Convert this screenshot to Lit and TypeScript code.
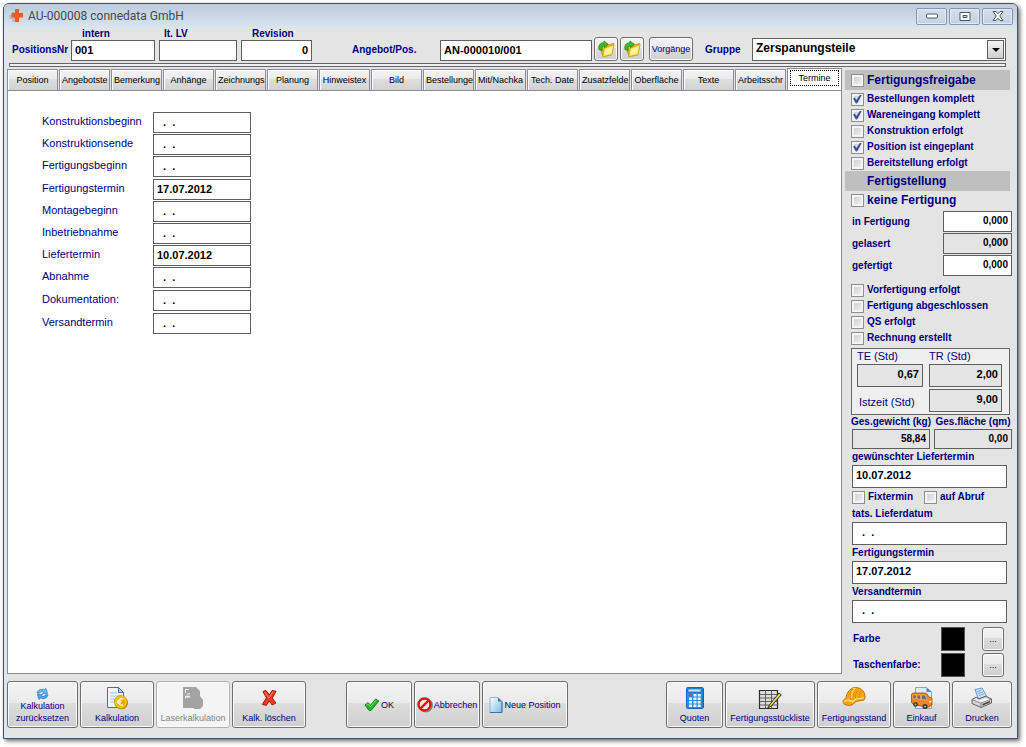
import { LitElement, html, css, svg, nothing } from "lit";
import { customElement, property, state } from "lit/decorators.js";
import { classMap } from "lit/directives/class-map.js";

const EMPTY_DATE = "  .  .";

const icons: Record<string, unknown> = {
  folder: svg`<svg width="18" height="18" viewBox="0 0 18 18">
    <path d="M5 5.5 7 3.5l3.500.2L11.500 5l5-1.600.5.6-2.500 11L6 16.500 3.500 9z" fill="#e3b91c" stroke="#a8860c" stroke-width=".7"/>
    <path d="M7 8.500 17 4.500l-2.200 10.300L5.800 16.500z" fill="#fde968" stroke="#c9a21a" stroke-width=".7"/>
    <path d="M8.500 10 15 7.300l-1.200 5.800-6 1.300z" fill="#fff6a8"/>
    <path d="M2 9.500C1 6 3 2.500 7 2.800L7 1l4.200 3.400L7.500 7.500V5.800C5 5.500 4.500 7.500 5.300 10.500z" fill="#3fbf2c" stroke="#157a12" stroke-width=".7"/></svg>`,
  refresh: svg`<svg width="13" height="12" viewBox="0 0 13 12">
    <path d="M1 5.200C1.500 1.800 5.500.4 8.500 1.900L10 .5l1.500 5H6.300l1.500-1.600C6 3 4.200 3.600 3.600 5.200z" fill="#6fc0fa" stroke="#1765b5" stroke-width=".6"/>
    <path d="M12 6.800c-.5 3.400-4.500 4.800-7.500 3.300L3 11.500l-1.500-5h5.200L5.200 8.100C7 9 8.800 8.400 9.400 6.800z" fill="#4ea6f0" stroke="#1765b5" stroke-width=".6"/></svg>`,
  calc: svg`<svg width="24" height="24" viewBox="0 0 24 24">
    <path d="M2.500 1.500h11l5 5v15h-16z" fill="#eef5fd" stroke="#4a6ea5"/>
    <path d="M13.500 1.500v5h5z" fill="#b9d2ee" stroke="#4a6ea5"/>
    <path d="M5 7h7M5 10h10M5 13h6M5 16h4" stroke="#a9c4e4"/>
    <ellipse cx="16.500" cy="17" rx="6.500" ry="6.300" fill="#c98c07"/>
    <circle cx="15.800" cy="16" r="6.400" fill="#fbc918" stroke="#c48a06" stroke-width=".8"/>
    <circle cx="15.800" cy="16" r="4.600" fill="#e9a90c"/>
    <path d="M18.300 13.600a3.100 3.100 0 1 0 0 4.800M11.800 15.200h4.700M11.800 16.900h4.200" stroke="#fff8d0" stroke-width="1.300" fill="none"/></svg>`,
  laser: svg`<svg width="24" height="24" viewBox="0 0 24 24">
    <path d="M2 1h13l4 4v5l3 4v6l-3 3h-6v-1H2z" fill="#a3a3a3"/>
    <path d="M4 3h4v1H5v3H4zM6 8l3-1v1l-3 1zM4 10l4-.5 2 2H5v1H4z" fill="#f5f5f5"/></svg>`,
  cross: svg`<svg width="24" height="24" viewBox="0 0 24 24">
    <path d="M6 5.500 9 4.500l3.300 4.500 2.700-4.500 4 .8-3.700 6.700 3.500 5-3.500 2-3.200-4-2.700 4.300-4-.8 4-6.700z" fill="#f2391f" stroke="#9e1408" stroke-width="1"/>
    <path d="M7.500 6 12 12l4-6.500" stroke="#ff8a70" stroke-width="1" fill="none"/></svg>`,
  ok: svg`<svg width="16" height="14" viewBox="0 0 16 14">
    <path d="M1 7 4 4.500l2.500 2.700L11.500 1l3.500 2L7 12.500H5z" fill="#25b52a" stroke="#0c7513" stroke-width=".8"/>
    <path d="M2.500 7 4 5.800l2.500 2.900L11.800 2.400" stroke="#7de873" fill="none" stroke-width=".9"/></svg>`,
  cancel: svg`<svg width="16" height="16" viewBox="0 0 16 16">
    <path d="M8.800 2.200a6 6 0 1 1 0 12.400a6 6 0 1 1 0-12.400M4.800 13 13.200 4.600" stroke="#8b8b8b" stroke-width="2" fill="none"/>
    <circle cx="7.500" cy="7.500" r="6" fill="#f3e9e9" stroke="#fb0007" stroke-width="2.400"/>
    <path d="M3.500 11.500l8-8" stroke="#fb0007" stroke-width="2.400"/></svg>`,
  page: svg`<svg width="14" height="16" viewBox="0 0 14 16">
    <defs><linearGradient id="pg" x2="1" y2="1"><stop offset="0" stop-color="#fff"/><stop offset="1" stop-color="#79bbe6"/></linearGradient></defs>
    <path d="M1 .5h8l4 4v11H1z" fill="url(#pg)" stroke="#7ba6cd" stroke-width=".8"/>
    <path d="M1 15.500h12v-11" fill="none" stroke="#33739f"/><path d="M9 .5v4h4z" fill="#2f7fbd"/></svg>`,
  quoten: svg`<svg width="24" height="24" viewBox="0 0 24 24">
    <path d="M20 1.500 21 3v18l-1 1.500z" fill="#1c5fa8"/>
    <rect x="3.500" y="1.500" width="16.500" height="21" rx="1" fill="#2b8de4" stroke="#1766b6"/>
    <path d="M5 3h13v3H5z" fill="#bfe7f5" stroke="#0f4f93" stroke-width=".6"/>
    <g fill="#e8f5fe"><path d="M10.500 8h3v2.500h-3zM14.700 8h3v2.500h-3zM6 11.500h3V14H6zM10.500 11.500h3V14h-3zM14.700 11.500h3V14h-3zM6 15h3v2.500H6zM10.500 15h3v2.500h-3zM14.700 15h3v2.500h-3zM6 18.500h3V21H6zM10.500 18.500h3V21h-3zM14.700 18.500h3V21h-3z"/></g>
    <path d="M6 8h3v2.500H6z" fill="#e0483c"/></svg>`,
  list: svg`<svg width="26" height="24" viewBox="0 0 26 24">
    <path d="M2.500 4.500h18v18h-18z" fill="#dcdcdc" stroke="#2c2c2c" stroke-width="1.200"/>
    <path d="M2.500 8.500h18M2.500 12h18M2.500 15.500h18M2.500 19h18M8.500 4.500v18M14.500 4.500v18" stroke="#555" stroke-width=".9"/>
    <path d="M12 19.500 22 7l2.300 1.800L14 20.500l-3.200 1z" fill="#d8c21c" stroke="#222" stroke-width=".9"/>
    <path d="M14 18.500 22.500 8.500" stroke="#fff59a" stroke-width=".8"/></svg>`,
  helmet: svg`<svg width="26" height="24" viewBox="0 0 26 24">
    <path d="M2 15.500c0-2 2-2.500 3-3C5.200 6.500 9 2.500 14.500 1.500 20.500 1.500 24.500 6 24 12l-1 2-8 1.500-4 3.500c-4 1-9 0-9-3.500z" fill="#fda60f" stroke="#ba6500" stroke-width=".9"/>
    <path d="M3 15.500c2-2 6-2 8.500.3L15 13l8-1" stroke="#ffe48a" stroke-width="1.200" fill="none"/>
    <path d="M9.500 3.500 12 1.500l4.500.3c-3 2-4.500 5.500-4.500 10l-2.500 1.500C9 9 9.500 6 12 3z" fill="#ffd155" stroke="#c87400" stroke-width=".6"/>
    <path d="M17 4.500c-2 2-2.800 4.500-2.700 7.500M20.500 5c-1.800 2-2.300 4-2.200 6.500" stroke="#e08300" fill="none"/></svg>`,
  van: svg`<svg width="24" height="24" viewBox="0 0 24 24">
    <path d="M5.500 1.500h11l5 4.500v16.500h-16z" fill="#dcebfa" stroke="#7fa5d1"/><path d="M16.500 1.500V6h5z" fill="#4d8acb"/>
    <path d="M1.500 9c0-1.500 1-2 2-2h11c2 0 3 1 4 3.500l3.500 2v6.500l-4 2.200-14-2.500-2.500-2z" fill="#f68319" stroke="#a94a00" stroke-width=".8"/>
    <path d="M2.800 9h3.400v4l-3.400-.5zM7 9h3.500v4.500L7 13zM11.500 9h3.300l2.500 5-5.800-.5z" fill="#5f6f85" stroke="#ffd09c" stroke-width=".5"/>
    <circle cx="5.500" cy="18.500" r="2.300" fill="#333"/><circle cx="5.500" cy="18.500" r=".9" fill="#bbb"/>
    <circle cx="15" cy="20.500" r="2.500" fill="#333"/><circle cx="15" cy="20.500" r="1" fill="#bbb"/>
    <path d="M19 15l2.500-.6v1.600l-2.500.7z" fill="#fff2b0"/></svg>`,
  print: svg`<svg width="24" height="24" viewBox="0 0 24 24">
    <path d="M5 3.500 12 2l4.500 8-8 3z" fill="#cfe4fb" stroke="#5b8fd0" stroke-width=".9"/>
    <path d="M7 5.500l4.500-1M8 7.500l5-1.200M9 9.500l5-1.500" stroke="#6ea3e0" stroke-width=".9"/>
    <path d="M2 13.500 6.500 11l1.800 2 7.500-2.700L21.500 13v4L11 21.500 2 17.500z" fill="#d4d4d4" stroke="#555" stroke-width=".9"/>
    <path d="M2 13.500 11 17.200 21.500 13M11 17.200v4" stroke="#777" stroke-width=".8" fill="none"/>
    <path d="M12.500 18l7.500-3v1.500l-7.500 3z" fill="#333"/><path d="M4 13.400l7 2.800 8-3-3-1.300-7.500 2.700-2-2z" fill="#f6f6f6"/></svg>`,
};

@customElement("tool-button")
export class ToolButton extends LitElement {
  @property() icon = "";
  @property() label = "";
  @property() hint = "";
  @property({ type: Boolean }) inline = false;
  @property({ type: Boolean }) disabled = false;
  @property({ type: Boolean }) compact = false;

  static styles = css`
    :host { display: flex; }
    .btn {
      flex: 1; min-width: 0; box-sizing: border-box; display: flex; flex-direction: column;
      align-items: center; justify-content: flex-end; gap: 2px; margin: 0; padding: 0 0 3px;
      border: 1px solid #6f6f6f; border-radius: 3px; color: #000080;
      background: linear-gradient(#f3f3f3, #ebebeb 46%, #dddddd 47%, #cfcfcf);
      box-shadow: inset 0 0 0 1px #fafafa;
      font: 9px/12px "Liberation Sans", Arial, sans-serif;
    }
    .inline { flex-direction: row; justify-content: center; gap: 1px; padding: 0; }
    .compact { gap: 0; }
    .btn:disabled { background: #f4f4f4; border-color: #adb2b5; color: #838383; }
    .text { white-space: pre; }
    svg { display: block; flex: none; }
  `;

  render() {
    return html`<button
      class=${classMap({ btn: true, inline: this.inline, compact: this.compact })}
      aria-label=${this.hint || nothing}
      ?disabled=${this.disabled}
    >${this.icon ? icons[this.icon] : nothing}${this.label ? html`<span class="text">${this.label}</span>` : nothing}</button>`;
  }
}

@customElement("app-root")
export class AppRoot extends LitElement {
  @state() private activeTab = "Termine";

  private tabs = ["Position", "Angebotste", "Bemerkung", "Anhänge", "Zeichnungs", "Planung", "Hinweistex", "Bild",
    "Bestellunge", "Mit/Nachka", "Tech. Date", "Zusatzfelde", "Oberfläche", "Texte", "Arbeitsschr", "Termine"];

  private dateGroups = [
    [["Konstruktionsbeginn", ""], ["Konstruktionsende", ""], ["Fertigungsbeginn", ""]],
    [["Fertigungstermin", "17.07.2012"], ["Montagebeginn", ""], ["Inbetriebnahme", ""], ["Liefertermin", "10.07.2012"], ["Abnahme", ""]],
    [["Dokumentation:", ""]],
    [["Versandtermin", ""]],
  ];

  static styles = css`
    :host {
      display: block; box-sizing: border-box; height: 100vh; min-height: 747px; padding: 3px 8px 8px 3px;
      background: #fff; color: #000080; font: bold 10px/12px "Liberation Sans", Arial, sans-serif;
    }
    * { box-sizing: border-box; }
    .window {
      height: 100%; display: flex; flex-direction: column; overflow: hidden;
      border: 1px solid #4b4f55; border-radius: 6px 6px 0 0; background: #e4e4e4;
      box-shadow: 2px 2px 4px #0009, inset 0 0 0 2px #dbe7f3;
    }
    .titlebar {
      flex: none; height: 24px; display: flex; align-items: center; gap: 4px; padding: 0 4px 0 5px;
      background: linear-gradient(#bccbdb, #d8e5f2); color: #45484d;
      font: 12px/16px Roboto, "Noto Sans", sans-serif;
    }
    .title { flex: 1; }
    .caption { display: flex; gap: 2px; }
    .cap {
      width: 31px; height: 17px; padding: 0; display: grid; place-items: center;
      border: 1px solid #8496ab; border-radius: 2px; background: linear-gradient(#d4e0ed, #c2d1e2);
      box-shadow: inset 0 0 0 1px #e2ebf4;
    }
    svg { display: block; flex: none; }

    input, select { font: bold 11px/13px "Liberation Sans", Arial, sans-serif; color: #000; border-radius: 0; margin: 0; }
    .box { width: 100%; min-width: 0; height: 21px; padding: 0 3px 1px; border: 1px solid #5f5f5f; background: #fff; outline: none; }
    .right { text-align: right; }
    .small { font-size: 10px; }
    .gray { background: #e4e4e4; }
    .tall { height: 23px; }

    .head { flex: none; display: flex; align-items: flex-end; height: 33px; padding: 0 11px 0 8px; }
    .cap-label { display: flex; align-items: center; height: 23px; white-space: nowrap; }
    .pos { width: 59px; }
    .field { display: flex; flex-direction: column; margin-right: 4px; }
    .field label { padding-left: 11px; }
    .field .near { padding-left: 5px; }
    .w-intern { width: 84px; }
    .w-lv { width: 78px; }
    .w-rev { width: 71px; }
    .offer { width: 88px; margin-left: 36px; }
    .w-offer { width: 152px; }
    .icon-btn { width: 24px; height: 24px; margin-left: 2px; }
    .history { width: 44px; height: 24px; margin: 0 12px 0 5px; }
    .group { width: 47px; }
    .combo { flex: 1; display: grid; height: 23px; }
    .combo > * { grid-area: 1 / 1; }
    .combo select { appearance: none; width: 100%; height: 23px; padding: 0 3px 3px; font-size: 12px; border: 1px solid #5f5f5f; background: #fff; }
    .arrow {
      justify-self: end; align-self: center; width: 17px; height: 19px; margin-right: 2px; display: grid; place-items: center;
      border: 1px solid #5f5f5f; background: linear-gradient(#f2f2f2, #d0d0d0); pointer-events: none;
    }
    .rule { flex: none; height: 4px; margin: 2px 11px 0 5px; border: 1px solid #666; background: #f0f0f0; }

    .work { flex: 1; display: flex; gap: 3px; padding: 0 5px 0 3px; }
    .main { flex: 1; min-width: 0; display: flex; flex-direction: column; padding-bottom: 5px; }
    .tabs { flex: none; display: flex; align-items: flex-end; gap: 1px; height: 23px; }
    .tab {
      flex: 1 1 0; min-width: 0; height: 21px; padding: 0 2px; overflow: hidden; display: flex;
      border: 1px solid #8b8c95; border-bottom: 0; box-shadow: inset 1px 1px 0 #fff;
      background: linear-gradient(#f3f3f3, #ebebeb 46%, #dedede 47%, #d2d2d2); color: #000;
      font: 9px/20px "Liberation Sans", Arial, sans-serif;
    }
    .tab span { margin: 0 auto; white-space: nowrap; }
    .tab.active { flex: 0 0 55px; height: 22px; padding: 1px 2px 4px; background: #fff; box-shadow: none; }
    .tab.active span { flex: 1; border: 1px dotted #000; line-height: 14px; }
    .panel { flex: 1; border: 1px solid #8b8c95; background: #fff; padding: 21px 34px; display: flex; flex-direction: column; gap: 2px; }
    .dates { display: flex; flex-direction: column; gap: 1px; }
    .date { display: grid; grid-template-columns: 111px 98px; font-weight: normal; font-size: 11px; }
    .date label { padding-top: 3px; }

    .side { flex: none; width: 167px; padding-top: 3px; display: flex; flex-direction: column; }
    .band { flex: none; height: 20px; margin-right: 2px; padding-left: 6px; display: flex; align-items: center; background: #bfbfbf; font-size: 12px; }
    .heading { padding-left: 22px; }
    .check { display: flex; align-items: center; gap: 3px; height: 16px; white-space: nowrap; }
    .checks { padding: 1px 0 0 6px; }
    .lower { padding: 6px 0 2px 6px; }
    .none { height: 18px; padding-left: 6px; font-size: 12px; }
    .tick { appearance: none; flex: none; width: 13px; height: 13px; display: grid; place-items: center; border: 1px solid #8e8f8f; background: linear-gradient(135deg, #c5c9ce, #f6f6f6); box-shadow: inset 0 0 0 2px #f4f4f4; }
    .tick:checked::before { content: ""; width: 9px; height: 9px; background: #3a539b; clip-path: polygon(0 45%, 20% 35%, 38% 62%, 80% 0, 100% 0, 45% 100%, 32% 100%); }
    .amounts { display: grid; grid-template-columns: 1fr 69px; row-gap: 1px; padding: 2px 0 0 7px; align-items: center; }
    .amounts input { padding-bottom: 3px; }
    .hours { display: grid; grid-template-columns: 66px 73px; column-gap: 6px; height: 67px; margin: 0 2px 0 6px; padding: 1px 5px 0; border: 1px solid #666; background: #efefef; font-weight: normal; font-size: 11px; }
    .hours input { padding-bottom: 3px; }
    .hours .wide { align-self: center; padding-left: 2px; }
    .weights { display: grid; grid-template-columns: 78px 78px; column-gap: 4px; margin: 0 0 0 7px; white-space: nowrap; }
    .weights label { height: 14px; padding-top: 1px; justify-self: center; }
    .weights input { height: 20px; padding-bottom: 2px; }
    .stack { margin: 0 5px 0 7px; display: flex; flex-direction: column; }
    .stack > label { line-height: 16px; }
    .stack > input { height: 23px; padding-bottom: 3px; }
    .pair { display: flex; gap: 11px; height: 18px; align-items: center; }
    .colors { display: grid; grid-template-columns: 1fr 24px 22px; column-gap: 17px; row-gap: 2px; align-items: center; margin: 4px 8px 0 8px; }
    .swatch { height: 24px; border: 1px solid #555; background: #000; }
    .more { height: 24px; }

    .foot { flex: none; display: flex; justify-content: space-between; gap: 8px; margin: 2px 5px 10px 3px; height: 47px; }
    .foot .set { display: flex; gap: 2px; }
    .foot .center { margin-right: 58px; }
    .w1 { width: 60px; } .w2 { width: 66px; } .w3 { width: 74px; } .w4 { width: 86px; } .w5 { width: 90px; }
    .w57 { width: 57px; }
    .w71 { width: 71px; }
  `;

  private check(id: string, label: string, checked = false, cls = "") {
    return html`<div class="check ${cls}"><input class="tick" type="checkbox" id=${id} ?checked=${checked}><label for=${id}>${label}</label></div>`;
  }

  render() {
    return html`<div class="window">
      <div class="titlebar">
        <svg width="15" height="15" viewBox="0 0 15 15">
          <path d="M3 3h4v3H9v4H7v3H3v-3H0V6h3z" fill="#bdbdbd"/>
          <path d="M6 0h4v4h4v4.500h-4V13H6V8.500H2.500V4H6z" fill="#ee5a24"/></svg>
        <span class="title">AU-000008 connedata GmbH</span>
        <div class="caption">
          <button class="cap" aria-label="Minimieren"><svg width="12" height="6"><rect x=".5" y="1" width="11" height="4" rx="1" fill="#fff" stroke="#51565e"/></svg></button>
          <button class="cap" aria-label="Maximieren"><svg width="12" height="9"><path d="M1 .5h10v8H1z" fill="#fff" stroke="#51565e"/><path d="M4 3.500h4v2H4z" fill="#c9d7e6" stroke="#51565e"/></svg></button>
          <button class="cap" aria-label="Schließen"><svg width="12" height="10" viewBox="0 0 12 10"><path d="M1 .5h3l2 2.300L8 .5h3L7.700 5 11 9.500H8L6 7.200 4 9.500H1L4.300 5z" fill="#fff" stroke="#51565e"/></svg></button>
        </div>
      </div>
      <div class="head">
        <label class="cap-label pos" for="intern">PositionsNr</label>
        <div class="field w-intern"><label for="intern">intern</label><input class="box" id="intern" value="001"></div>
        <div class="field w-lv"><label class="near" for="lv">lt. LV</label><input class="box" id="lv"></div>
        <div class="field w-rev"><label for="rev">Revision</label><input class="box right" id="rev" value="0"></div>
        <label class="cap-label offer" for="offer">Angebot/Pos.</label>
        <div class="w-offer"><input class="box" id="offer" value="AN-000010/001"></div>
        <tool-button class="icon-btn" inline icon="folder" hint="Angebot öffnen"></tool-button>
        <tool-button class="icon-btn" inline icon="folder" hint="Position öffnen"></tool-button>
        <tool-button class="history" inline label="Vorgänge"></tool-button>
        <label class="cap-label group" for="group">Gruppe</label>
        <div class="combo">
          <select id="group"><option>Zerspanungsteile</option></select>
          <span class="arrow"><svg width="8" height="4"><path d="M0 0h8L4 4z"/></svg></span>
        </div>
      </div>
      <div class="rule"></div>
      <div class="work">
        <div class="main">
          <div class="tabs" role="tablist">
            ${this.tabs.map((t) => html`<button role="tab" aria-selected=${t === this.activeTab}
              class=${classMap({ tab: true, active: t === this.activeTab })}
              @click=${() => (this.activeTab = t)}><span>${t}</span></button>`)}
          </div>
          <div class="panel">
            ${this.dateGroups.map((g) => html`<div class="dates">${g.map(([name, value]) => html`<div class="date">
              <label for=${name}>${name}</label><input class="box" id=${name} .value=${value || EMPTY_DATE}>
            </div>`)}</div>`)}
          </div>
        </div>
        <div class="side">
          <div class="band">${this.check("frei", "Fertigungsfreigabe")}</div>
          <div class="checks">
            ${this.check("best", "Bestellungen komplett", true)}
            ${this.check("ware", "Wareneingang komplett", true)}
            ${this.check("kons", "Konstruktion erfolgt")}
            ${this.check("plan", "Position ist eingeplant", true)}
            ${this.check("bereit", "Bereitstellung erfolgt")}
          </div>
          <div class="band heading">Fertigstellung</div>
          ${this.check("keine", "keine Fertigung", false, "none")}
          <div class="amounts">
            <label for="inf">in Fertigung</label><input class="box right small" id="inf" value="0,000">
            <label for="gel">gelasert</label><input class="box right small gray" id="gel" value="0,000" readonly>
            <label for="gef">gefertigt</label><input class="box right small" id="gef" value="0,000">
          </div>
          <div class="checks lower">
            ${this.check("vor", "Vorfertigung erfolgt")}
            ${this.check("abg", "Fertigung abgeschlossen")}
            ${this.check("qs", "QS erfolgt")}
            ${this.check("rech", "Rechnung erstellt")}
          </div>
          <div class="hours">
            <label for="te">TE (Std)</label><label for="tr">TR (Std)</label>
            <input class="box right gray tall" id="te" value="0,67" readonly><input class="box right gray tall" id="tr" value="2,00" readonly>
            <label class="wide" for="ist">Istzeit (Std)</label><input class="box right gray tall" id="ist" value="9,00" readonly>
          </div>
          <div class="weights">
            <label for="kg">Ges.gewicht (kg)</label><label for="qm">Ges.fläche (qm)</label>
            <input class="box right small gray" id="kg" value="58,84" readonly><input class="box right small gray" id="qm" value="0,00" readonly>
          </div>
          <div class="stack">
            <label for="wish">gewünschter Liefertermin</label><input class="box" id="wish" value="10.07.2012">
            <div class="pair">${this.check("fix", "Fixtermin")}${this.check("abruf", "auf Abruf")}</div>
            <label for="tats">tats. Lieferdatum</label><input class="box" id="tats" .value=${EMPTY_DATE}>
            <label for="fert">Fertigungstermin</label><input class="box" id="fert" value="17.07.2012">
            <label for="vers">Versandtermin</label><input class="box" id="vers" .value=${EMPTY_DATE}>
          </div>
          <div class="colors">
            <span>Farbe</span><span class="swatch"></span><tool-button class="more" inline label="..." hint="Farbe wählen"></tool-button>
            <span>Taschenfarbe:</span><span class="swatch"></span><tool-button class="more" inline label="..." hint="Taschenfarbe wählen"></tool-button>
          </div>
        </div>
      </div>
      <div class="foot">
        <div class="set">
          <tool-button class="w71" compact icon="refresh" label=${"Kalkulation\nzurücksetzen"}></tool-button>
          <tool-button class="w3" icon="calc" label="Kalkulation"></tool-button>
          <tool-button class="w3" icon="laser" label="Laserkalkulation" disabled></tool-button>
          <tool-button class="w3" icon="cross" label="Kalk. löschen"></tool-button>
        </div>
        <div class="set center">
          <tool-button class="w2" inline icon="ok" label="OK"></tool-button>
          <tool-button class="w2" inline icon="cancel" label="Abbrechen"></tool-button>
          <tool-button class="w4" inline icon="page" label="Neue Position"></tool-button>
        </div>
        <div class="set">
          <tool-button class="w57" icon="quoten" label="Quoten"></tool-button>
          <tool-button class="w5" icon="list" label="Fertigungsstückliste"></tool-button>
          <tool-button class="w3" icon="helmet" label="Fertigungsstand"></tool-button>
          <tool-button class="w57" icon="van" label="Einkauf"></tool-button>
          <tool-button class="w1" icon="print" label="Drucken"></tool-button>
        </div>
      </div>
    </div>`;
  }
}
